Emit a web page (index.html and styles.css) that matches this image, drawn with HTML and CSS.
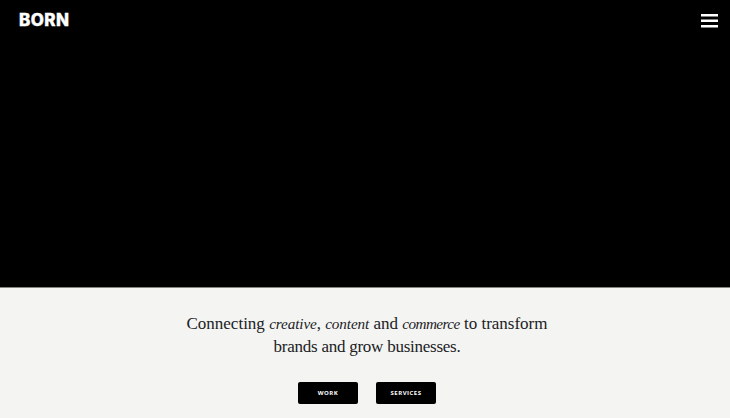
FILE: index.html
```html
<!DOCTYPE html>
<html lang="en">
<head>
<meta charset="utf-8">
<title>BORN</title>
<link rel="stylesheet" href="styles.css">
</head>
<body>
<header class="hero">
  <a class="logo">BORN</a>
  <svg class="menu" viewBox="0 0 17 14"><path d="M0 1.25h17M0 6.75h17M0 12.25h17" stroke="#fff" stroke-width="2.3"/></svg>
</header>
<main class="intro">
  <p class="tagline">Connecting <em class="creative">creative</em>, <em class="content">content</em> and <em class="commerce">commerce</em> to transform<br><span class="second">brands and grow businesses.</span></p>
  <nav class="actions"><a class="button">WORK</a><a class="button">SERVICES</a></nav>
</main>
</body>
</html>
```
FILE: styles.css
```css
* { box-sizing: border-box; }
body { margin: 0; height: 418px; overflow: hidden; background: #f4f4f2; }
.hero { display: flex; justify-content: space-between; align-items: flex-start; height: 288px; padding: 14px 12px 0 19px; background: #000; border-bottom: 1px solid #858580; }
.logo { font: 800 17px/12px Inter, sans-serif; letter-spacing: 0.4px; color: #fff; -webkit-text-stroke: 0.4px #fff; }
.menu { width: 17px; height: 14px; }
.intro { display: flex; flex-direction: column; align-items: center; padding: 24px 0 0 4px; }
.tagline { margin: 0; font: 17px/23px "Liberation Serif", serif; color: #20211f; text-align: center; white-space: nowrap; }
.tagline em { font-size: 15.2px; line-height: 0; }
.creative, .content { letter-spacing: -0.1px; }
.commerce { letter-spacing: -0.55px; }
.second { letter-spacing: -0.25px; }
.actions { display: flex; gap: 18px; margin-top: 24px; }
.button { width: 60px; height: 22px; border-radius: 2px; background: #000; color: #fff; font: 700 6px/23px "Open Sans", sans-serif; letter-spacing: 0.5px; text-align: center; }
```
